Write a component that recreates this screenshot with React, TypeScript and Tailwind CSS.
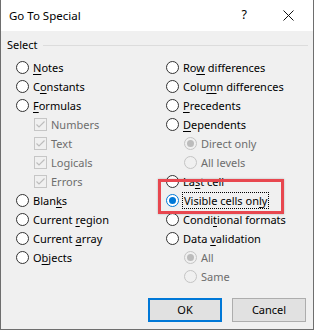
import React from "react";

type Item = {
  label: string;
  key?: number;
  kind: "radio" | "check";
  indent?: boolean;
  disabled?: boolean;
  checked?: boolean;
  focus?: boolean;
};

const left: Item[] = [
  { label: "Notes", key: 0, kind: "radio" },
  { label: "Constants", key: 1, kind: "radio" },
  { label: "Formulas", key: 0, kind: "radio" },
  { label: "Numbers", kind: "check", indent: true, disabled: true, checked: true },
  { label: "Text", kind: "check", indent: true, disabled: true, checked: true },
  { label: "Logicals", kind: "check", indent: true, disabled: true, checked: true },
  { label: "Errors", kind: "check", indent: true, disabled: true, checked: true },
  { label: "Blanks", key: 4, kind: "radio" },
  { label: "Current region", key: 8, kind: "radio" },
  { label: "Current array", key: 8, kind: "radio" },
  { label: "Objects", key: 1, kind: "radio" },
];

const right: Item[] = [
  { label: "Row differences", key: 2, kind: "radio" },
  { label: "Column differences", key: 4, kind: "radio" },
  { label: "Precedents", key: 0, kind: "radio" },
  { label: "Dependents", key: 0, kind: "radio" },
  { label: "Direct only", kind: "radio", indent: true, disabled: true, checked: true },
  { label: "All levels", kind: "radio", indent: true, disabled: true },
  { label: "Last cell", key: 2, kind: "radio" },
  { label: "Visible cells only", key: 16, kind: "radio", checked: true, focus: true },
  { label: "Conditional formats", key: 5, kind: "radio" },
  { label: "Data validation", key: 5, kind: "radio" },
  { label: "All", kind: "radio", indent: true, disabled: true, checked: true },
  { label: "Same", kind: "radio", indent: true, disabled: true },
];

const Radio = ({ item }: { item: Item }) => {
  if (item.disabled)
    return (
      <span className="flex size-[13px] shrink-0 items-center justify-center rounded-full border border-[#c4c4c4] bg-[#f0f0f0]">
        {item.checked && <span className="size-[7px] rounded-full bg-[#bcbcbc]" />}
      </span>
    );
  if (item.checked)
    return (
      <span className="flex size-[13px] shrink-0 items-center justify-center rounded-full border border-[#0078d7] bg-white">
        <span className="size-[7px] rounded-full bg-[#0078d7]" />
      </span>
    );
  return <span className="size-[13px] shrink-0 rounded-full border border-[#333333] bg-white" />;
};

const Check = () => (
  <span className="flex size-[13px] shrink-0 items-center justify-center border border-[#c6c6c6] bg-[#f0f0f0]">
    <svg width="11" height="11" viewBox="0 0 11 11">
      <path d="M1.5 5.5 L4 8 L9.5 2.5" fill="none" stroke="#bdbdbd" strokeWidth="1.2" />
    </svg>
  </span>
);

const Label = ({ item }: { item: Item }) => {
  const t = item.label;
  const body =
    item.key === undefined ? (
      t
    ) : (
      <>
        {t.slice(0, item.key)}
        <span className="underline underline-offset-[2px]">{t[item.key]}</span>
        {t.slice(item.key + 1)}
      </>
    );
  return (
    <span
      className={`leading-[15px] ${item.disabled ? "text-[#6d6d6d]" : "text-black"} ${
        item.focus ? "-ml-[1px] border border-dotted border-black px-[1px]" : ""
      }`}
    >
      {body}
    </span>
  );
};

const Row = ({ item }: { item: Item }) => (
  <div className={`flex h-[19px] items-center gap-[4px] ${item.indent ? "pl-[18px]" : ""}`}>
    {item.kind === "radio" ? <Radio item={item} /> : <Check />}
    <Label item={item} />
  </div>
);

export default function App() {
  return (
    <div
      className="relative flex h-[330px] w-[314px] flex-col border-x border-b border-[#6e6e6e] text-[11px] text-black"
      style={{ fontFamily: '"Segoe UI", "Noto Sans", sans-serif' }}
    >
      <div className="flex h-[31px] items-center bg-white pl-[8px]">
        <span className="text-[11.5px]">Go To Special</span>
        <span className="ml-auto mr-[36px] text-[12.5px]">?</span>
        <svg width="11" height="11" viewBox="0 0 11 11" className="mr-[19px]">
          <path d="M0.5 0.5 L10.5 10.5 M10.5 0.5 L0.5 10.5" stroke="#111" strokeWidth="1" />
        </svg>
      </div>

      <div className="flex flex-1 flex-col bg-[#f0f0f0]">
        <div className="mt-[7px] flex h-[14px] items-center pl-[6px] pr-[5px]">
          <span>Select</span>
          <span className="ml-[5px] h-px flex-1 bg-[#dcdcdc]" />
        </div>

        <div className="mt-[6px] grid grid-cols-[150px_1fr]">
          <div className="pl-[15px]">
            {left.map((it) => (
              <Row key={it.label} item={it} />
            ))}
          </div>
          <div className="pl-[15px]">
            {right.map((it) => (
              <Row key={it.label} item={it} />
            ))}
          </div>
        </div>

        <div className="mt-auto mb-[7px] flex justify-end gap-[10px] pr-[7px]">
          <button className="h-[24px] w-[74px] border-2 border-[#0078d7] bg-[#e1e1e1]">OK</button>
          <button className="h-[24px] w-[74px] border border-[#adadad] bg-[#e1e1e1]">Cancel</button>
        </div>
      </div>

      <div className="absolute left-[157px] top-[179px] h-[35px] w-[126px] border-[3px] border-[#e8474f] shadow-[0_0_2px_rgba(0,0,0,0.25)]" />
    </div>
  );
}
